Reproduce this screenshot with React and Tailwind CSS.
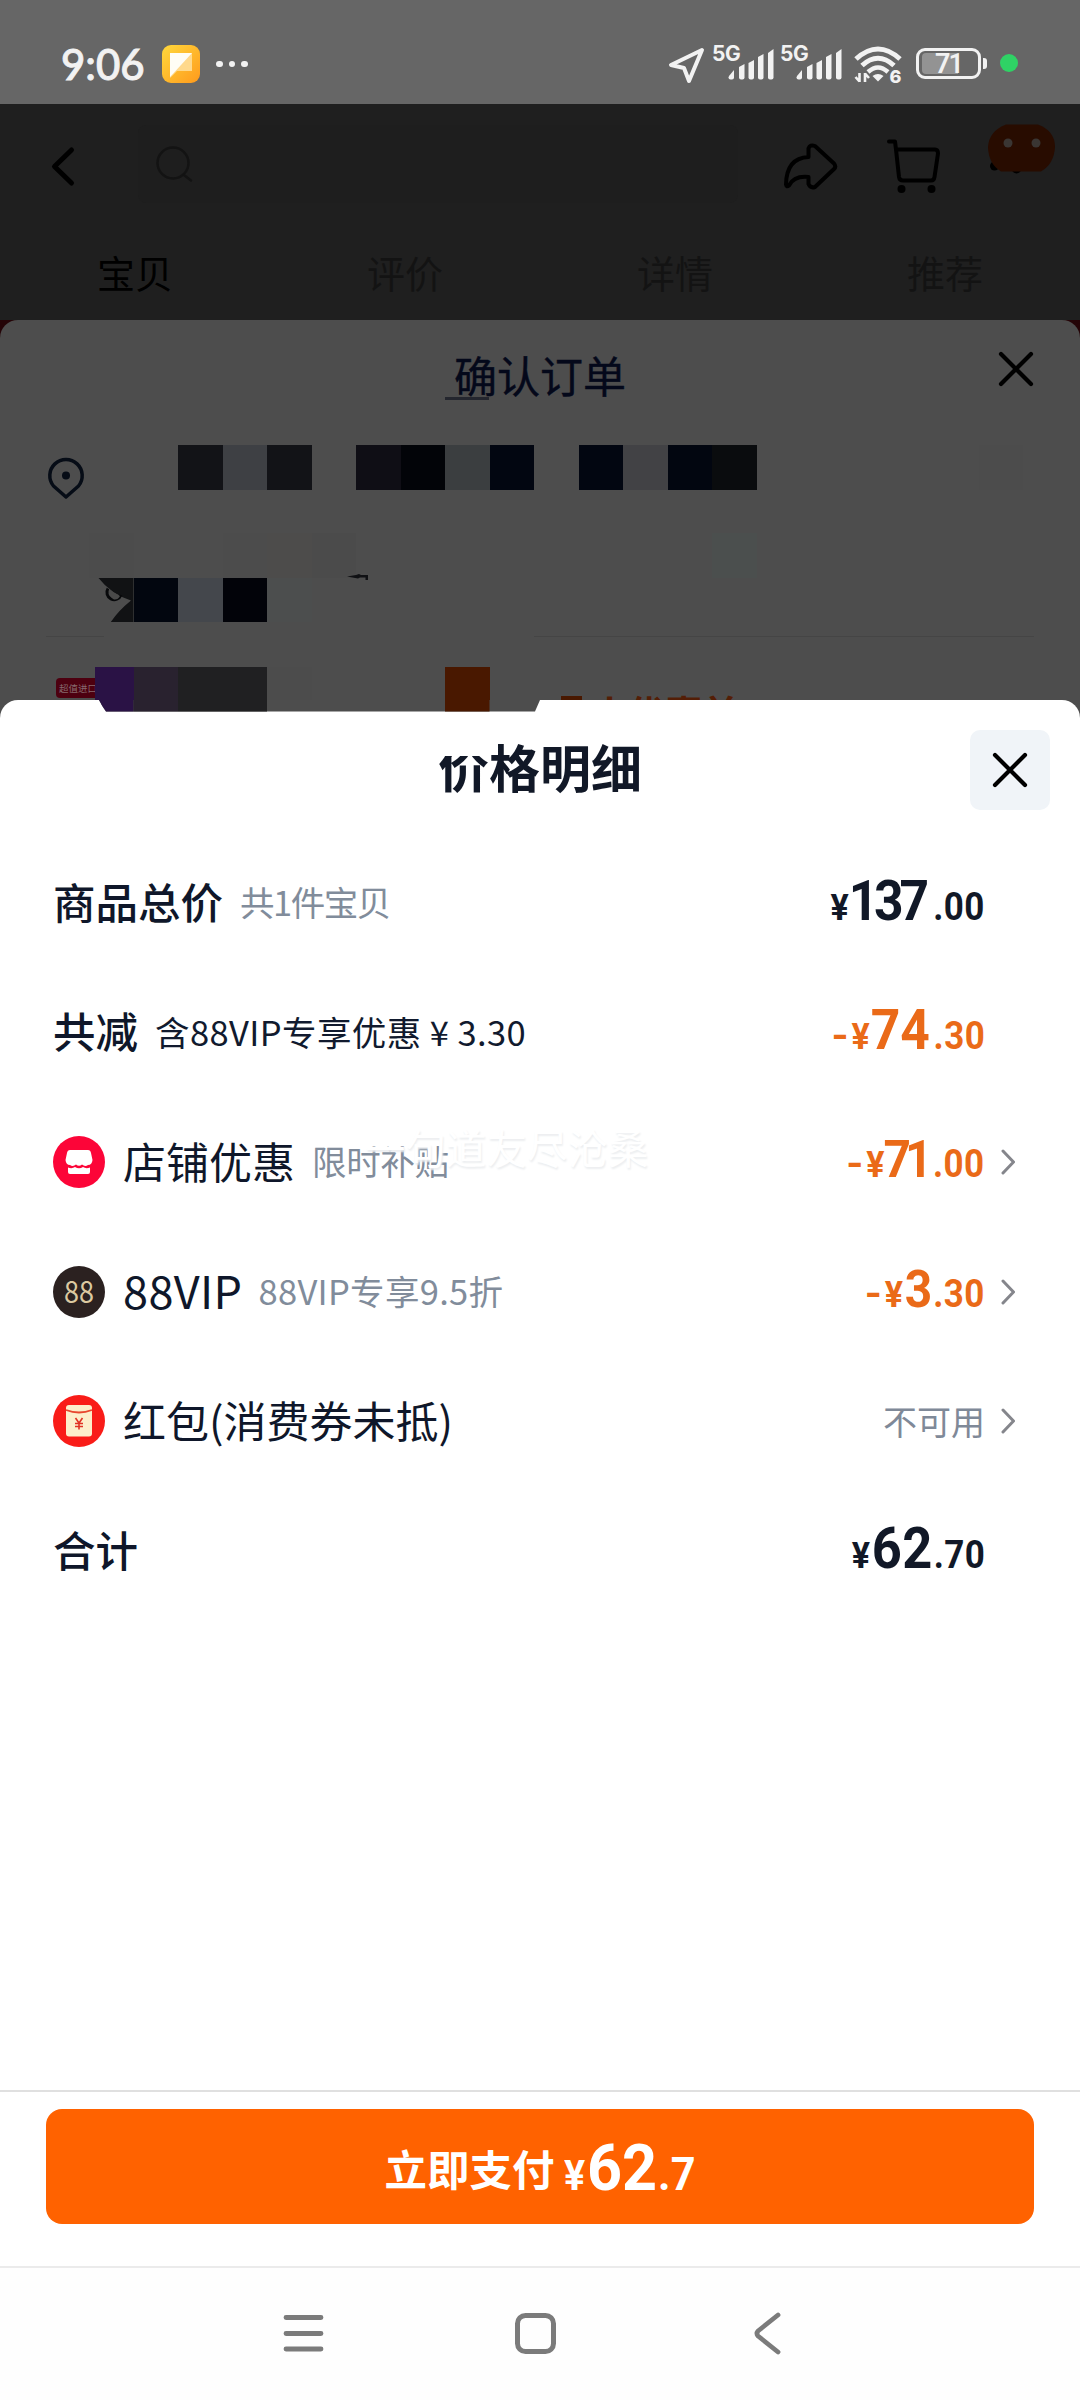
import clsx from "clsx";

const tabs = ["宝贝", "评价", "详情", "推荐"];

// null leaves the cell empty
const addressCells = [
  "#121317", "#3e4044", "#121317", null, "#0f0e15", "#020408", "#3b3e40",
  "#020611", null, "#020611", "#424245", "#020610", "#0a0c0e",
];
const phoneCells = ["#4c4c4c", null, null, "#4c4c4c", "#4d4c4b", "#4b4b4b", null, null, null, null, null, null, null, null, "#4b4f4e"];
const nameCells = ["#02060f", "#44474c", "#020309", "#4c4e4e"];
const goodsCells = ["#29222f", "#202022", "#202022", "#4c4c4c", null, null, null, "#491800"];

const Cells = ({ cells, className }) => (
  <div className={clsx("flex h-[44.5px]", className)}>
    {cells.map((color, i) => (
      <div key={i} className="h-full w-[44.5px]" style={{ background: color || "transparent" }} />
    ))}
  </div>
);

const CloseIcon = () => (
  <svg width="36" height="36" viewBox="0 0 36 36" fill="none" stroke="#000" strokeWidth="4.2" strokeLinecap="round">
    <path d="M3 3L33 33M33 3L3 33" />
  </svg>
);

const Signal = () => (
  <div className="relative h-[38px] w-[63px]">
    <span className="absolute -top-[2px] left-0 font-['Inter','Noto_Sans_CJK_SC',sans-serif] text-[21px] leading-[21px] font-bold tracking-[-0.5px]">5G</span>
    <svg className="absolute top-0 left-0" width="63" height="38" viewBox="0 0 63 38" fill="#f2f2f2">
      <path d="M17 31l5-6v7.500q0 2-2 2h-1.500q-2 0-2-2z" />
      <path d="M27 22l5.500-3v13.500q0 2-2 2h-1.500q-2 0-2-2z" />
      <path d="M36.500 18l5.500-3v17.500q0 2-2 2h-1.500q-2 0-2-2z" />
      <path d="M46 12l5.500-3v23.500q0 2-2 2h-1.500q-2 0-2-2z" />
      <path d="M56 8l5.500-4v28.500q0 2-2 2h-1.500q-2 0-2-2z" />
    </svg>
  </div>
);

const StatusBar = () => (
  <div className="flex h-[104px] items-start bg-[#666666] pt-[45px] pr-[62px] pl-[61px] text-[#f2f2f2]">
    <span className="w-[101px] font-['Lato','Noto_Sans_CJK_SC',sans-serif] text-[42px] leading-[38px] font-medium [-webkit-text-stroke:0.9px_#f2f2f2]">9:06</span>
    <svg width="38" height="38" viewBox="0 0 38 38">
      <defs>
        <linearGradient id="note" x1="0" y1="0" x2="1" y2="1">
          <stop offset="0" stopColor="#ffd83c" />
          <stop offset="1" stopColor="#ff9a1c" />
        </linearGradient>
      </defs>
      <rect width="38" height="38" rx="9" fill="url(#note)" />
      <path d="M8 8h22v18H15l-7 7z" fill="#ffd98c" />
      <path d="M8 8h22L8 32z" fill="#fffdf5" />
    </svg>
    <div className="ml-[16px] flex h-[38px] items-center gap-[6px]">
      <i className="size-[6.500px] rounded-full bg-[#f2f2f2]" />
      <i className="size-[6.500px] rounded-full bg-[#f2f2f2]" />
      <i className="size-[6.500px] rounded-full bg-[#f2f2f2]" />
    </div>
    <div className="ml-auto flex items-start">
      <svg className="mr-[6px]" width="38" height="40" viewBox="0 0 38 40" fill="none" stroke="#f2f2f2" strokeWidth="4" strokeLinejoin="round">
        <path d="M34 5L3 20L16 23L21 36Z" />
      </svg>
      <Signal />
      <div className="ml-[5px]">
        <Signal />
      </div>
      <svg className="ml-[11px]" width="48" height="40" viewBox="0 0 48 40" fill="none" stroke="#f2f2f2" strokeWidth="5">
        <path d="M2 14Q24 -6 46 14" />
        <path d="M8 20.500Q24 6 40 20.500" />
        <path d="M14 27Q24 18 34 27" strokeWidth="4.500" />
        <path d="M18.500 31Q24 27 29.500 31L24 36.500Z" fill="#f2f2f2" stroke="none" />
        <path d="M5.500 28v9M1.500 32l4 4.500M11 37v-9M15 33l-4 -4.500" strokeWidth="2.600" />
        <text x="35.500" y="37.500" fontSize="18" fontWeight="800" fontFamily="Inter, sans-serif" fill="#f2f2f2" stroke="none">6</text>
      </svg>
      <div className="relative mt-[3px] ml-[14px] flex h-[31px] w-[65px] items-center justify-center rounded-[9px] border-[3.500px] border-[#f2f2f2]">
        <i className="absolute top-[2px] left-[3px] h-[21px] w-[36px] rounded-l-[4px] bg-[#939393]" />
        <span className="relative font-['Roboto','Noto_Sans_CJK_SC',sans-serif] text-[27px] leading-[26px] font-semibold tracking-[-2px]">71</span>
      </div>
      <i className="mt-[13px] ml-[2px] h-[11px] w-[4px] rounded-r-[3px] bg-[#f2f2f2]" />
      <i className="mt-[9px] ml-[13px] size-[18px] rounded-full bg-[#2fd265]" />
    </div>
  </div>
);

const PageHeader = () => (
  <div className="h-[216px] bg-[#1f1f1f]">
    <div className="flex h-[119px] items-center pl-[50px]">
      <svg width="26" height="44" viewBox="0 0 26 44" fill="none" stroke="#000" strokeWidth="5" strokeLinecap="round" strokeLinejoin="round" className="mt-[4px]">
        <path d="M21.500 6L4.500 22.500L21.500 39" />
      </svg>
      <div className="ml-[62px] flex h-[78px] w-[600px] items-center rounded-lg bg-[#1e1e1e] pl-[18px]">
        <svg width="38" height="38" viewBox="0 0 38 38" fill="none" stroke="#131313" strokeWidth="2.500" strokeLinecap="round">
          <circle cx="17" cy="18" r="15.500" />
          <path d="M28 30L35 35.500" />
        </svg>
      </div>
      <svg className="mt-[2px] ml-[44px]" width="58" height="50" viewBox="0 0 58 50" fill="none" stroke="#000" strokeWidth="4" strokeLinejoin="round">
        <path d="M26.500 17V8.500Q28 4 33 6L52 23.500Q54.500 26.500 52 29L33 47Q28.500 48.500 26.500 44V37Q12 35.500 7 45.500Q4.500 47.500 4 44.500Q4.500 18 26.500 17Z" />
      </svg>
      <svg className="mt-[3px] ml-[44px]" width="58" height="60" viewBox="0 0 58 60" fill="none" stroke="#000" strokeWidth="4" strokeLinecap="round" strokeLinejoin="round">
        <path d="M5 6.500H11L12 14.500L15 42Q15.500 45.500 19 45.500H47Q50 45.500 50.500 42L54 18.500Q54 14.500 51 14.500H12" />
        <circle cx="17.500" cy="54" r="4" fill="#000" stroke="none" />
        <circle cx="47.500" cy="54" r="4" fill="#000" stroke="none" />
      </svg>
      <svg className="-mt-[27px] ml-[44px]" width="70" height="60" viewBox="0 0 70 60">
        <circle cx="8.500" cy="46" r="4.500" fill="#000" />
        <circle cx="30.500" cy="48.500" r="5" fill="#000" />
        <path d="M20 4.500H52Q69 11 69 27Q68 44 55 51.500H15Q2.500 44 2 27Q3 11 20 4.500Z" fill="#280c00" />
        <circle cx="22" cy="23" r="4.500" fill="#3a3633" />
        <circle cx="50" cy="23" r="4.500" fill="#3a3633" />
      </svg>
    </div>
    <div className="grid grid-cols-4 pt-[22px] text-center text-[38px] leading-[54px]">
      {tabs.map((tab, i) => (
        <span key={tab} className={i === 0 ? "text-black" : "text-[#131313]"}>
          {tab}
        </span>
      ))}
    </div>
  </div>
);

const OrderSheet = () => (
  <div className="bg-[#240407]">
    <div className="h-[392px] overflow-hidden rounded-t-[18px] bg-[#4d4d4d]">
      <div className="relative flex h-[125px] justify-center pt-[24px]">
        <span className="text-[43px] leading-[60px] text-[#04081a] [-webkit-text-stroke:0.4px_#04081a]">确认订单</span>
        <i className="absolute top-[77px] left-[445px] h-[3px] w-[44px] bg-[#24262e]" />
        <div className="absolute top-[31px] right-[46px]">
          <CloseIcon />
        </div>
      </div>
      <div className="flex h-[88px]">
        <svg className="mt-[11px] ml-[47px]" width="38" height="44" viewBox="0 0 38 44" fill="none" stroke="#060c16" strokeWidth="3.500" strokeLinejoin="round">
          <path d="M19 41L6.500 30A16.200 16.200 0 1 1 31.500 30Z" />
          <circle cx="19" cy="19.500" r="4" fill="#060c16" stroke="none" />
        </svg>
        <Cells cells={addressCells} className="ml-[93px]" />
        <i className="ml-[222px] h-[44.500px] w-[44px] bg-[#4c4c4c]" />
      </div>
      <div className="relative">
        <Cells cells={phoneCells} className="ml-[89px]" />
        <svg className="absolute top-[40px] left-[346px]" width="24" height="8" viewBox="0 0 24 8" fill="#101114">
          <path d="M1 3.500L10 2L13 1L15 2H22V7H19.500V4.500H14L12 5.500Z" />
        </svg>
      </div>
      <div className="flex h-[58px]">
        <svg className="ml-[89px]" width="44.500" height="44.500" viewBox="0 0 44.500 44.500">
          <path d="M9.500 0H44.500V44.500H21.500Q29 33 42 22.500Q22 16 9.500 0Z" fill="#111214" />
          <path d="M19 10.500A7.300 7.300 0 1 0 32 17" fill="none" stroke="#08090b" strokeWidth="3" />
          <path d="M20 11Q25 15.500 31 18Q29 22 25 21.500Q19 18 20 11Z" fill="#4a4a4a" />
        </svg>
        <Cells cells={nameCells} />
      </div>
      <div className="mx-[46px] flex h-[31px] justify-between">
        <i className="h-px w-[58px] bg-[#454545]" />
        <i className="h-px w-[500px] bg-[#454545]" />
      </div>
      <div className="relative flex">
        <div className="mt-[11px] ml-[56px] h-[20px] w-[39px] rounded-l-[4px] bg-[#4d0010] pl-[3px] text-[9.500px] leading-[20px] whitespace-nowrap text-[#86696e]">
          超值进口
        </div>
        <i className="relative h-[45px] w-[38.500px] bg-[#2a1245]" />
        <Cells cells={goodsCells} />
        <i className="mt-[29px] ml-[71px] h-[16px] w-[21px] bg-[#491800]" />
        <span className="ml-[10px] pt-[23px] text-[37px] leading-[44px] font-bold whitespace-nowrap text-[#541e06]">人优惠前¥137</span>
      </div>
    </div>
  </div>
);

// lower edge of the goods mosaic, it hangs over the sheet
const Notch = () => (
  <svg className="absolute top-0 left-[99px]" width="441" height="11.500" viewBox="0 0 441 11.500">
    <defs>
      <clipPath id="notch">
        <path d="M0 0H441L436 11.500H7Q3 6 0 0Z" />
      </clipPath>
    </defs>
    <g clipPath="url(#notch)">
      <rect width="441" height="12" fill="#4d4d4d" />
      <rect width="34.500" height="12" fill="#2a1245" />
      <rect x="34.500" width="44.500" height="12" fill="#29222f" />
      <rect x="79" width="89" height="12" fill="#202022" />
      <rect x="346" width="44.500" height="12" fill="#491800" />
    </g>
  </svg>
);

const Chevron = () => (
  <svg className="ml-[16px] w-[14px]" width="14" height="26" viewBox="0 0 14 26" fill="none" stroke="#85868c" strokeWidth="3" strokeLinecap="round" strokeLinejoin="round">
    <path d="M2 2L12.500 13L2 24" />
  </svg>
);

const Price = ({ minus, yuan, cents, orange, yuanClass }) => (
  <div
    className={clsx(
      "mb-[4px] flex origin-right scale-x-[0.92] items-baseline font-['Roboto','Noto_Sans_CJK_SC',sans-serif] font-bold",
      orange ? "text-[#ea6a18]" : "text-[#111827]"
    )}
  >
    {minus && <span className="mr-[3px] inline-block origin-right scale-x-[1.25] text-[38px]">-</span>}
    <span className="text-[37px] tracking-[-1px]">¥</span>
    <span className={yuanClass}>{yuan}</span>
    <span className="ml-[4px] text-[38px] tracking-[0.5px]">.{cents}</span>
  </div>
);

const ShopIcon = () => (
  <svg width="52" height="52" viewBox="0 0 52 52">
    <circle cx="26" cy="26" r="26" fill="#fc0538" />
    <path d="M17 14H35Q37.500 14 38 17L39.500 24Q39 29 35 29Q32 31 29 28.500Q26 31 23 28.500Q20 31 17 29Q13 29 12.500 24L14 17Q14.500 14 17 14Z" fill="#fff" />
    <path d="M15 31.500Q19 33 22 31Q26 33.500 30 31Q33 33 37 31.500V36Q37 38 35 38H17Q15 38 15 36Z" fill="#fff" />
  </svg>
);

const VipIcon = () => (
  <svg width="52" height="52" viewBox="0 0 52 52">
    <circle cx="26" cy="26" r="26" fill="#2b2120" />
    <text x="11" y="37" textLength="30" lengthAdjust="spacingAndGlyphs" fontSize="31" fontFamily="'Noto Sans CJK SC', sans-serif" fontWeight="400" fill="#dcc9a0">
      88
    </text>
  </svg>
);

const PacketIcon = () => (
  <svg width="52" height="52" viewBox="0 0 52 52">
    <circle cx="26" cy="26" r="26" fill="#f91c18" />
    <rect x="13" y="10" width="26" height="31.500" rx="3" fill="#fdeecb" />
    <path d="M13 15Q26 20 39 15" fill="none" stroke="#e8472f" strokeWidth="1.800" />
    <path d="M22.500 23L26 28L29.500 23M26 28V34.500M22 28.500H30M22 31.500H30" fill="none" stroke="#e03224" strokeWidth="1.600" />
  </svg>
);

const rows = [
  {
    label: "商品总价",
    labelClass: "text-[42.500px] font-medium",
    note: "共1件宝贝",
    noteClass: "ml-[17px] text-[#818c9b] tracking-[-1.5px]",
    price: { yuan: "137", cents: "00", yuanClass: "text-[56px] tracking-[-4.5px] ml-[1px] mr-[5px]" },
  },
  {
    label: "共减",
    labelClass: "text-[42.500px] font-medium",
    note: "含88VIP专享优惠 ¥ 3.30",
    noteClass: "ml-[17px] text-[#111a2e] tracking-[0.4px]",
    price: { minus: true, yuan: "74", cents: "30", orange: true, yuanClass: "text-[56px] ml-[2px]" },
  },
  {
    icon: ShopIcon,
    label: "店铺优惠",
    labelClass: "text-[43px]",
    note: "限时补贴",
    noteClass: "ml-[17px] text-[#818c9b] tracking-[-0.3px]",
    price: { minus: true, yuan: "71", cents: "00", orange: true, yuanClass: "text-[52px] tracking-[-6.5px] mr-[3px]" },
    link: true,
  },
  {
    icon: VipIcon,
    label: "88VIP",
    labelClass: "text-[45px] tracking-[0.4px]",
    note: "88VIP专享9.5折",
    noteClass: "ml-[16px] text-[#818c9b] tracking-[0.3px]",
    price: { minus: true, yuan: "3", cents: "30", orange: true, yuanClass: "text-[52px] ml-[3px] -mr-[3px]" },
    link: true,
  },
  { icon: PacketIcon, label: "红包(消费券未抵)", labelClass: "text-[43px]", text: "不可用", link: true },
  {
    label: "合计",
    labelClass: "text-[42.500px] font-medium",
    price: { yuan: "62", cents: "70", yuanClass: "text-[57px] tracking-[0.5px] ml-[3px] -mr-[3px]" },
  },
];

const PriceRow = ({ row }) => {
  const Icon = row.icon;
  return (
    <div className={clsx("flex h-[129.600px] items-center pl-[53px]", row.link ? "pr-[65px]" : "pr-[95px]")}>
      {Icon && (
        <span className="mr-[18px]">
          <Icon />
        </span>
      )}
      <span className={clsx("mb-[4px] leading-[60px] text-[#0f172a]", row.labelClass)}>{row.label}</span>
      {row.note && <span className={clsx("mb-[3px] text-[34.500px] leading-[60px]", row.noteClass)}>{row.note}</span>}
      <div className="ml-auto flex items-center">
        {row.price && <Price {...row.price} />}
        {row.text && <span className="mb-[2px] text-[34px] text-[#7f8998]">{row.text}</span>}
        {row.link && <Chevron />}
      </div>
    </div>
  );
};

const PriceSheet = () => (
  <div className="relative -mt-[12px] bg-[#4d4d4d]">
    <div className="flex h-[1390px] flex-col rounded-t-[18px] bg-white">
      <Notch />
      <div className="relative flex h-[138px] justify-center pt-[31px]">
        <h1 className="text-[51px] leading-[70px] font-bold text-[#111827]">价格明细</h1>
        <i className="absolute top-[40px] left-[436px] h-[16px] w-[54px] bg-white" />
        <button className="absolute top-[30px] right-[30px] flex size-[80px] items-center justify-center rounded-[10px] bg-[#f0f4f8]">
          <CloseIcon />
        </button>
      </div>
      <div className="relative">
        {rows.map((row) => (
          <PriceRow key={row.label} row={row} />
        ))}
        <span className="absolute top-[281px] left-[365px] text-[40.500px] leading-[56px] text-white [text-shadow:1px_2px_2px_#eceef0]">
          一句道友尽沧桑
        </span>
      </div>
    </div>
  </div>
);

const PayBar = () => (
  <div className="h-[176px] border-t-2 border-[#e0e0e0] bg-white px-[46px] pt-[17px]">
    <button className="flex h-[115px] w-full items-center justify-center rounded-[16px] bg-[#ff6200] text-white">
      <span className="mt-[3px] text-[42.500px] leading-[60px] font-bold">立即支付</span>
      <span className="mt-[8px] -mr-[8px] ml-[9px] flex origin-left scale-x-[0.94] items-baseline font-['Roboto','Noto_Sans_CJK_SC',sans-serif] font-bold">
        <span className="text-[42px] tracking-[-1px]">¥</span>
        <span className="ml-[3px] text-[65px] leading-[70px]">62</span>
        <span className="ml-px text-[46px]">.7</span>
      </span>
    </button>
  </div>
);

const NavBar = () => (
  <div className="flex h-[134px] items-start border-t-2 border-[#ebebeb] bg-[#fefefe] pt-[43px] pl-[282px]">
    <svg width="44" height="46" viewBox="0 0 44 46" stroke="#7b7b7b" strokeWidth="4.800" strokeLinecap="round">
      <path d="M4 6.500H39M4 22.500H39M4 38H39" />
    </svg>
    <svg className="ml-[187px]" width="44" height="46" viewBox="0 0 44 46" fill="none" stroke="#7b7b7b" strokeWidth="5">
      <rect x="4.500" y="4.500" width="36" height="36" rx="8" />
    </svg>
    <svg className="ml-[195px]" width="30" height="46" viewBox="0 0 30 46" fill="none" stroke="#7b7b7b" strokeWidth="4.800" strokeLinecap="round" strokeLinejoin="round">
      <path d="M26 4L6 20Q4 22.500 6 25L26 41" />
    </svg>
  </div>
);

export default function App() {
  return (
    <div className="flex h-[2400px] w-[1080px] flex-col overflow-hidden bg-white font-['Noto_Sans_CJK_SC',sans-serif]">
      <StatusBar />
      <PageHeader />
      <OrderSheet />
      <PriceSheet />
      <PayBar />
      <NavBar />
    </div>
  );
}
